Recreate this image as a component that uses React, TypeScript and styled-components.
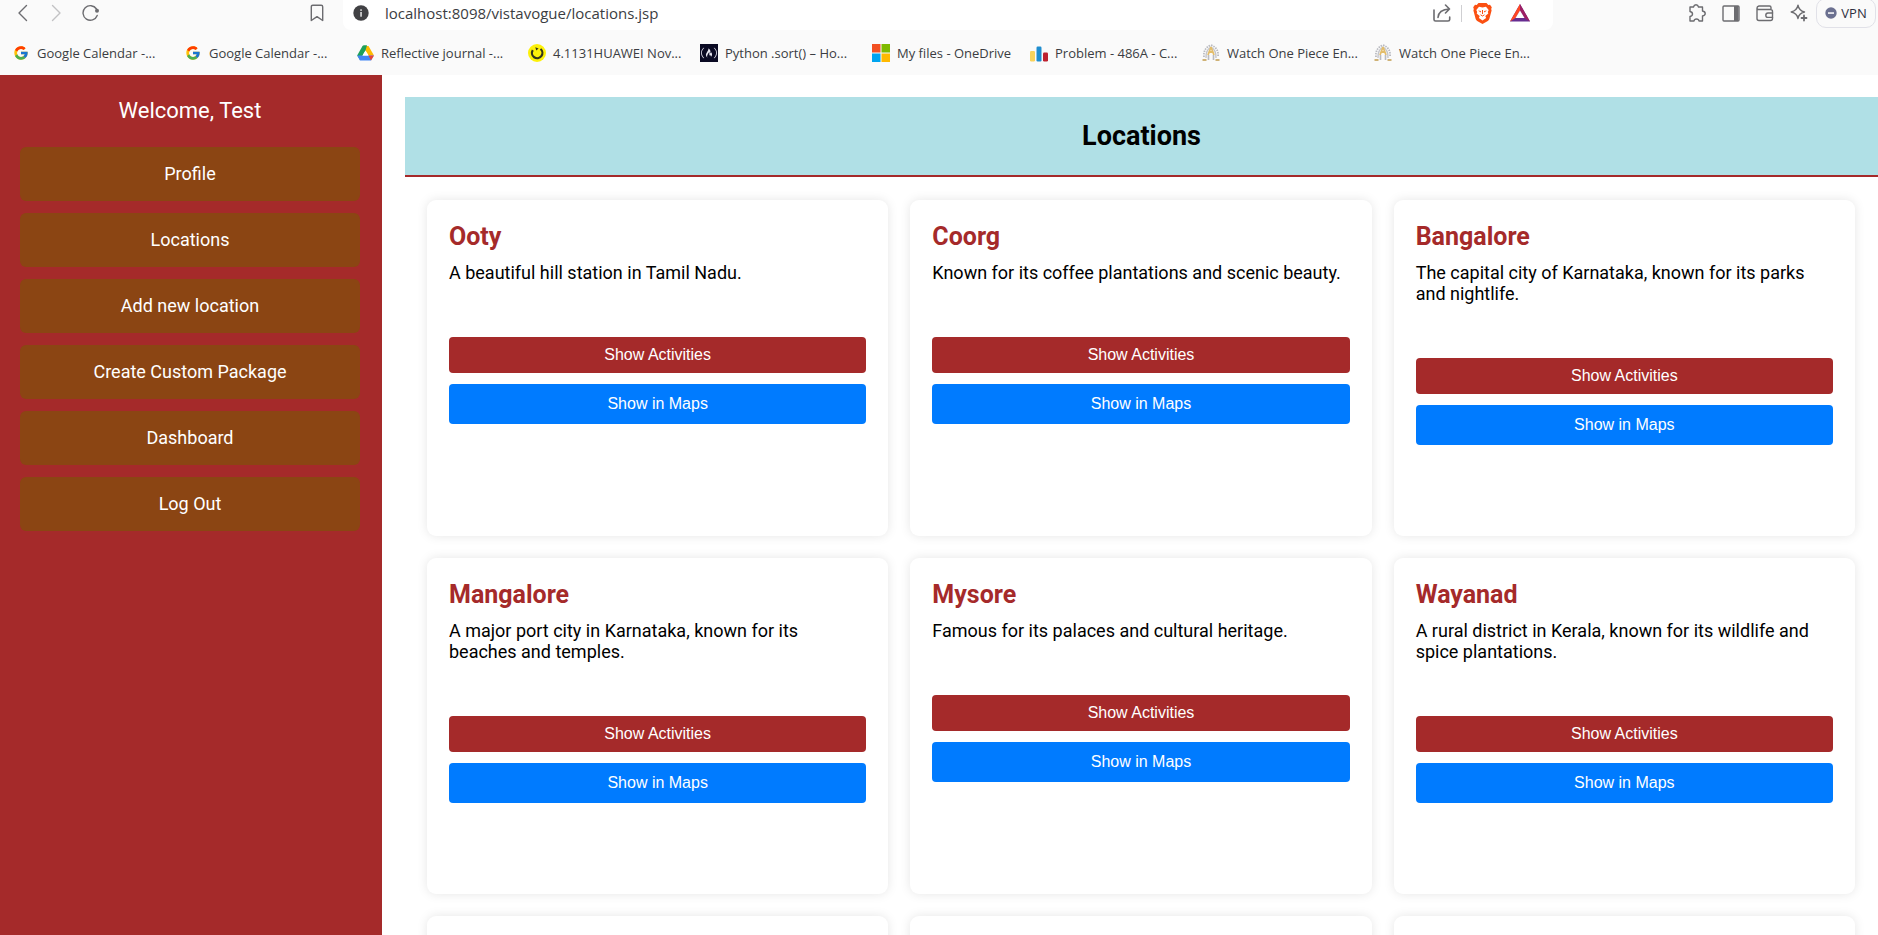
import React from "react";
import styled, { createGlobalStyle } from "styled-components";
import { FcGoogle } from "react-icons/fc";
import { FaFreeCodeCamp } from "react-icons/fa";

const brown = "#a52a2a";
const chromeFont = `"Open Sans", "Noto Sans", sans-serif`;

const GlobalStyle = createGlobalStyle`
  *, *::before, *::after { box-sizing: border-box; }
  body {
    margin: 0;
    background: #fff;
    color: #000;
    font-family: Roboto, "Liberation Sans", sans-serif;
  }
`;

const Page = styled.div`
  display: flex;
  flex-direction: column;
  height: 100vh;
  overflow: hidden;
`;

/* Browser bars */

const BrowserBars = styled.header`
  flex: none;
  background: #fafafa;
  font-family: ${chromeFont};
`;

const Toolbar = styled.div`
  display: flex;
  height: 30px;
`;

const ToolGroup = styled.div<{ $side: "left" | "right" }>`
  display: flex;
  align-items: center;
  flex: 0 0 ${(p) => (p.$side === "left" ? "343px" : "325px")};
  justify-content: ${(p) => (p.$side === "left" ? "flex-start" : "flex-end")};
  padding: ${(p) => (p.$side === "left" ? "0 9px 4px 6px" : "0 2px 4px 0")};
`;

const ToolButton = styled.button<{ $push?: boolean; $faded?: boolean; $wide?: boolean }>`
  display: flex;
  align-items: center;
  justify-content: center;
  width: ${(p) => (p.$wide ? "38px" : "34px")};
  height: 26px;
  margin: 0 0 0 ${(p) => (p.$push ? "auto" : "0")};
  padding: 0;
  border: 0;
  background: none;
  color: ${(p) => (p.$faded ? "#c2c2c4" : "#6c6c70")};
`;

const AddressBar = styled.div`
  display: flex;
  align-items: center;
  flex: 1;
  min-width: 0;
  padding: 0 14px 4px 10px;
  border-radius: 0 0 8px 8px;
  background: #fff;
`;

const AddressInput = styled.input`
  flex: 1;
  min-width: 0;
  height: 24px;
  padding: 0 16px;
  border: 0;
  outline: 0;
  background: transparent;
  color: #3b3d42;
  font: 15px/24px ${chromeFont};
`;

const Divider = styled.span`
  width: 1px;
  height: 17px;
  margin: 0 1px 0 2px;
  background: #cfcfd2;
`;

const VpnButton = styled.button`
  display: flex;
  align-items: center;
  justify-content: center;
  gap: 4px;
  width: 60px;
  height: 30px;
  flex: none;
  margin: 0;
  padding: 0;
  border: 1px solid #e1e1e8;
  border-radius: 10px;
  background: #fafafa;
  color: #2e3040;
  font: 13px/16px ${chromeFont};
`;

const Bookmarks = styled.nav`
  display: flex;
  align-items: center;
  height: 45px;
  padding-left: 12px;
  overflow: hidden;
`;

const Bookmark = styled.a<{ $short?: boolean }>`
  display: flex;
  align-items: center;
  gap: 7px;
  flex: 0 0 ${(p) => (p.$short ? "158px" : "172px")};
  color: #3b3d42;
  font-size: 13px;
  line-height: 18px;
  text-decoration: none;
  white-space: nowrap;
`;

const Favicon = styled.span`
  display: flex;
  align-items: center;
  justify-content: center;
  width: 18px;
  height: 18px;
  flex: none;
`;

const CodeTile = styled.span`
  display: flex;
  align-items: center;
  justify-content: center;
  width: 18px;
  height: 18px;
  background: #0a0a23;
  color: #e6e6f0;
`;

/* Site */

const Site = styled.div`
  display: flex;
  flex: 1;
  min-height: 0;
`;

const Sidebar = styled.aside`
  flex: 0 0 382px;
  padding: 23px 22px 22px 20px;
  background: ${brown};
  color: #fff;
  text-align: center;
`;

const Welcome = styled.h2`
  margin: 0 0 23px;
  font-size: 22px;
  line-height: 26px;
  font-weight: 400;
`;

const Menu = styled.nav`
  display: flex;
  flex-direction: column;
  gap: 12px;
`;

const MenuLink = styled.a`
  padding: 17px 16px;
  border-radius: 6px;
  background: #8b4513;
  color: #fff;
  font-size: 18px;
  line-height: 20px;
  text-decoration: none;
`;

const Content = styled.main`
  flex: 1;
  min-width: 0;
  padding: 22px 0 0 23px;
  overflow-y: auto;
  scrollbar-width: none;
`;

const PageHeader = styled.div`
  padding: 22px;
  border-bottom: 2px solid ${brown};
  background: #b0e0e6;
  text-align: center;
`;

const PageTitle = styled.h1`
  margin: 0;
  font-size: 27px;
  line-height: 34px;
  font-weight: 700;
`;

const CardGrid = styled.div`
  display: grid;
  grid-template-columns: repeat(3, 1fr);
  gap: 22px;
  padding: 23px 23px 22px 22px;
`;

const Card = styled.article`
  display: flex;
  flex-direction: column;
  min-height: 336px;
  padding: 22px;
  border-radius: 9px;
  background: #fff;
  box-shadow: 0 0 11px rgba(0, 0, 0, 0.1);
`;

const CardTitle = styled.h3`
  margin: 0 0 10px;
  color: ${brown};
  font-size: 25px;
  line-height: 30px;
  font-weight: 700;
`;

const CardText = styled.p`
  margin: 0 0 54px;
  font-size: 18px;
  line-height: 21px;
`;

const CardButton = styled.button<{ $kind: "activities" | "maps" }>`
  width: 100%;
  margin: 0 0 11px;
  padding: ${(p) => (p.$kind === "maps" ? "11px" : "9px")} 16px;
  border: 0;
  border-radius: 4px;
  background: ${(p) => (p.$kind === "maps" ? "#007bff" : brown)};
  color: #fff;
  font: 16px/18px "Liberation Sans", Arial, sans-serif;
`;

/* Icons */

const line = {
  fill: "none",
  stroke: "currentColor",
  strokeWidth: 1.4,
  strokeLinecap: "round" as const,
  strokeLinejoin: "round" as const,
};

const BackIcon = () => (
  <svg width="18" height="18" viewBox="0 0 18 18" {...line}><path d="M12.5 1.5 5 9l7.5 7.5" /></svg>
);
const ForwardIcon = () => (
  <svg width="18" height="18" viewBox="0 0 18 18" {...line}><path d="M4.500 1.500 12 9l-7.500 7.500" /></svg>
);
const ReloadIcon = () => (
  <svg width="18" height="18" viewBox="0 0 18 18" {...line}>
    <path d="M15.200 11.500A7.300 7.300 0 1 1 14.500 5" />
    <circle cx="15" cy="6.700" r="2" fill="currentColor" stroke="none" />
  </svg>
);
const SaveIcon = () => (
  <svg width="14" height="18" viewBox="0 0 14 18" {...line}>
    <path d="M1.300 2.700q0-1.500 1.500-1.500h8.400q1.500 0 1.500 1.500v13.800L7 12.600l-5.700 3.900z" />
  </svg>
);
const InfoIcon = () => (
  <svg width="16" height="16" viewBox="0 0 16 16">
    <circle cx="8" cy="8" r="7.700" fill="#414144" />
    <rect x="7.300" y="7" width="1.500" height="4.700" fill="#e8e8e8" />
    <rect x="7.300" y="4.300" width="1.500" height="1.600" fill="#e8e8e8" />
  </svg>
);
const ShareIcon = () => (
  <svg width="18" height="18" viewBox="0 0 18 18" {...line} strokeWidth="1.600">
    <path d="M1 6v9.500q0 1.500 1.500 1.500H15q1.700 0 1.700-1.500V13" />
    <path d="M5 13.500Q5.500 5.500 16.500 5M12.500 1l4 4-4 4" />
  </svg>
);
const ShieldIcon = () => (
  <svg width="19" height="21" viewBox="0 0 19 21">
    <path d="M5.500 0h8L15.300 2l1.700-.2L18.800 4.300 18.200 6l.4 1.500-2.200 8.300Q16 17 14.800 17.900L9.500 21l-5.300-3.100Q3 17 2.600 15.800L.4 7.500.8 6 .2 4.300 2 1.800 3.700 2z" fill="#fb5012" />
    <path d="M6 3.800 9.500 4.400 13 3.800 15.700 7 14.800 9l.5 1.500-3 2.500.8 2L9.500 17.500 5.900 15l.8-2-3-2.500L4.200 9l-.9-2z" fill="#fff" />
    <path d="M5 7.500 8 8 7.700 9.500zM14 7.500 11 8l.3 1.500z" fill="#fb5012" />
    <path d="M9.500 7v4M7.500 11.800l2 1.200 2-1.200" fill="none" stroke="#fb5012" strokeWidth="1" />
  </svg>
);
const BatIcon = () => (
  <svg width="20" height="18" viewBox="0 0 20 18">
    <path d="M10 0 20 17.500H0z" fill="#662d91" />
    <path d="M10 0 20 17.500 14.500 14 10 6.500z" fill="#9e1f63" />
    <path d="M10 0v6.500L5.500 14 0 17.500z" fill="#ff4724" />
    <path d="M10 6.500 14.500 14h-9z" fill="#fff" />
  </svg>
);
const PuzzleIcon = () => (
  <svg width="18" height="18" viewBox="0 0 18 18" {...line}>
    <path d="M2 3h3.500Q6 .8 8 .8T10.500 3H14.500v4Q17.200 7.500 17.200 9.500T14.500 12v5H11q-.3-2-2.500-2T6 17H2v-4.500Q4.500 12 4.500 10T2 7.500z" />
  </svg>
);
const PanelIcon = () => (
  <svg width="18" height="17" viewBox="0 0 18 17" {...line}>
    <rect x="1" y="1" width="16" height="15" rx="1" />
    <path d="M12 1h4.500v15H12z" fill="currentColor" stroke="none" />
  </svg>
);
const WalletIcon = () => (
  <svg width="18" height="17" viewBox="0 0 18 17" {...line}>
    <path d="M1 3.200V13.500q0 2 2 2h11.500q2 0 2-2V6.500q0-2-2-2H3Q1 4.500 1 3T3 1h10.500q1.500 0 1.500 1.500v2" />
    <path d="M16.500 8H12q-2.200 0-2.200 2.200T12 12.400h4.500" />
  </svg>
);
const SparkleIcon = () => (
  <svg width="18" height="18" viewBox="0 0 18 18" {...line}>
    <path d="M8 1.200q.9 5.500 6.500 6.800-5.600 1.200-6.500 6.500Q7 9.200 1.200 8 7 6.700 8 1.200z" />
    <path d="M14 11.500v5M11.500 14h5" strokeWidth="1.800" />
  </svg>
);
const VpnDot = () => (
  <svg width="12" height="12" viewBox="0 0 12 12">
    <circle cx="6" cy="6" r="5.700" fill="#6b7090" />
    <rect x="3" y="5.300" width="6" height="1.500" fill="#fff" />
  </svg>
);
const DriveIcon = () => (
  <svg width="17" height="16" viewBox="0 0 17 16">
    <path d="M5.500 1h6L17 10.500h-5.500z" fill="#ffba00" />
    <path d="M5.500 1Q6 .3 7 .3h3L8.500 5.500 3 15 .2 10.500z" fill="#1ea05a" />
    <path d="M.2 10.500h16.600L14 15.600H3z" fill="#4285f4" />
    <path d="M8.500 5.500 11.500 10.500h-6z" fill="#fff" />
    <path d="M11.500 10.500H17L14 15.500z" fill="#ea4335" />
  </svg>
);
const SmileIcon = () => (
  <svg width="18" height="18" viewBox="0 0 18 18">
    <circle cx="9" cy="9" r="9" fill="#fdf10a" />
    <path d="M4.800 6.200A5.200 5.200 0 1 0 12.500 5" fill="none" stroke="#33351c" strokeWidth="2.200" />
    <path d="m7.300 3.300 3.300 1.200-2.300 2z" fill="#33351c" />
  </svg>
);
const WindowsIcon = () => (
  <svg width="18" height="18" viewBox="0 0 18 18">
    <path d="M0 0h8.500v8.500H0z" fill="#f25022" />
    <path d="M9.500 0H18v8.500H9.500z" fill="#7fba00" />
    <path d="M0 9.500h8.500V18H0z" fill="#00a4ef" />
    <path d="M9.500 9.500H18V18H9.500z" fill="#ffb900" />
  </svg>
);
const BarsIcon = () => (
  <svg width="18" height="18" viewBox="0 0 18 18">
    <rect x="0" y="7" width="5" height="10.500" rx="1.200" fill="#f9d35c" />
    <rect x="6.500" y="2.500" width="5" height="15" rx="1.200" fill="#1f8dcf" />
    <rect x="13" y="8.500" width="5" height="9" rx="1.200" fill="#bd2230" />
  </svg>
);
const CrestIcon = () => (
  <svg width="18" height="17" viewBox="0 0 18 17" fill="none">
    <path d="M2 13Q1 4 9 1.200 17 4 16 13" stroke="#b9bac0" strokeWidth="1.800" strokeDasharray="1.500 1" />
    <path d="M4 14Q3.500 6 9 3q5.500 3 5 11" stroke="#c4c5ca" strokeWidth="1.400" />
    <path d="M9 3 6 11M9 3l3 8M7.300 8h3.400" stroke="#e3bd6a" strokeWidth="1.800" />
    <path d="M6.500 11v5M11.500 11v5" stroke="#b9bac0" strokeWidth="1.600" />
    <path d="M.5 16h4M13.500 16h4" stroke="#cfb276" strokeWidth="1.800" />
  </svg>
);

const bookmarks = [
  { label: "Google Calendar -...", icon: <FcGoogle size={16} /> },
  { label: "Google Calendar -...", icon: <FcGoogle size={16} /> },
  { label: "Reflective journal -...", icon: <DriveIcon /> },
  { label: "4.1131HUAWEI Nov...", icon: <SmileIcon /> },
  { label: "Python .sort() – Ho...", icon: <CodeTile><FaFreeCodeCamp size={16} /></CodeTile> },
  { label: "My files - OneDrive", icon: <WindowsIcon />, short: true },
  { label: "Problem - 486A - C...", icon: <BarsIcon /> },
  { label: "Watch One Piece En...", icon: <CrestIcon /> },
  { label: "Watch One Piece En...", icon: <CrestIcon /> },
];

const menu = ["Profile", "Locations", "Add new location", "Create Custom Package", "Dashboard", "Log Out"];

const locations = [
  { name: "Ooty", text: "A beautiful hill station in Tamil Nadu." },
  { name: "Coorg", text: "Known for its coffee plantations and scenic beauty." },
  { name: "Bangalore", text: "The capital city of Karnataka, known for its parks and nightlife." },
  { name: "Mangalore", text: "A major port city in Karnataka, known for its beaches and temples." },
  { name: "Mysore", text: "Famous for its palaces and cultural heritage." },
  { name: "Wayanad", text: "A rural district in Kerala, known for its wildlife and spice plantations." },
];

export default function App() {
  return (
    <Page>
      <GlobalStyle />
      <BrowserBars>
        <Toolbar>
          <ToolGroup $side="left">
            <ToolButton aria-label="Back"><BackIcon /></ToolButton>
            <ToolButton aria-label="Forward" $faded><ForwardIcon /></ToolButton>
            <ToolButton aria-label="Reload"><ReloadIcon /></ToolButton>
            <ToolButton aria-label="Bookmark" $push><SaveIcon /></ToolButton>
          </ToolGroup>
          <AddressBar>
            <InfoIcon />
            <AddressInput aria-label="Address" defaultValue="localhost:8098/vistavogue/locations.jsp" />
            <ToolButton aria-label="Share"><ShareIcon /></ToolButton>
            <Divider />
            <ToolButton aria-label="Shields" $wide><ShieldIcon /></ToolButton>
            <ToolButton aria-label="Rewards" $wide><BatIcon /></ToolButton>
          </AddressBar>
          <ToolGroup $side="right">
            <ToolButton aria-label="Extensions"><PuzzleIcon /></ToolButton>
            <ToolButton aria-label="Side panel"><PanelIcon /></ToolButton>
            <ToolButton aria-label="Wallet"><WalletIcon /></ToolButton>
            <ToolButton aria-label="Assistant"><SparkleIcon /></ToolButton>
            <VpnButton><VpnDot />VPN</VpnButton>
          </ToolGroup>
        </Toolbar>
        <Bookmarks aria-label="Bookmarks">
          {bookmarks.map((b, i) => (
            <Bookmark key={i} href="#" $short={b.short}>
              <Favicon>{b.icon}</Favicon>
              {b.label}
            </Bookmark>
          ))}
        </Bookmarks>
      </BrowserBars>

      <Site>
        <Sidebar>
          <Welcome>Welcome, Test</Welcome>
          <Menu aria-label="Main">
            {menu.map((item) => (
              <MenuLink key={item} href="#">{item}</MenuLink>
            ))}
          </Menu>
        </Sidebar>
        <Content>
          <PageHeader>
            <PageTitle>Locations</PageTitle>
          </PageHeader>
          <CardGrid>
            {locations.map((l) => (
              <Card key={l.name}>
                <CardTitle>{l.name}</CardTitle>
                <CardText>{l.text}</CardText>
                <CardButton $kind="activities">Show Activities</CardButton>
                <CardButton $kind="maps">Show in Maps</CardButton>
              </Card>
            ))}
            <Card />
            <Card />
            <Card />
          </CardGrid>
        </Content>
      </Site>
    </Page>
  );
}
